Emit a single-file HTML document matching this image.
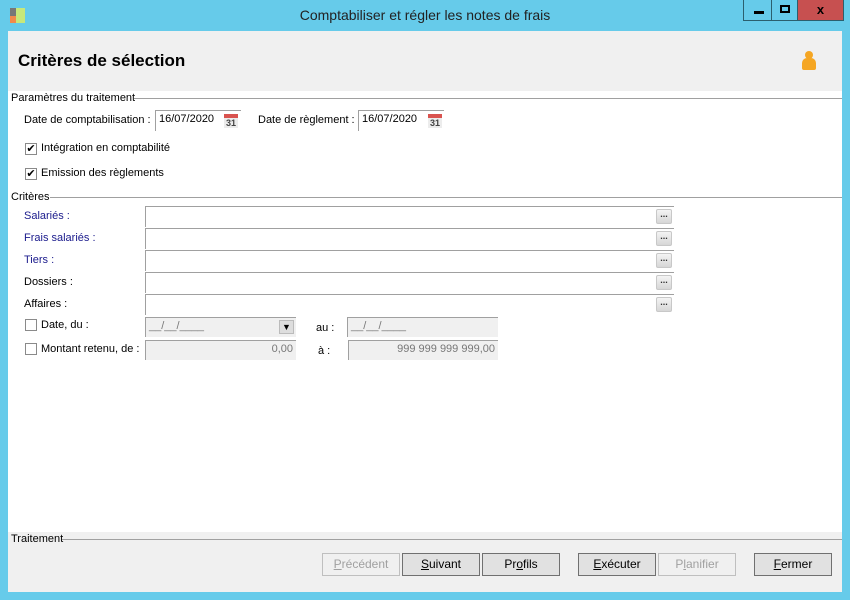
<!DOCTYPE html>
<html><head><meta charset="utf-8"><style>
*{margin:0;padding:0;box-sizing:border-box}
body{width:850px;height:600px;background:#66cbea;font-family:"Liberation Sans",sans-serif;font-size:11px;color:#000;position:relative;overflow:hidden}
.a{position:absolute}
.win{left:8px;top:31px;width:834px;height:561px;background:#fff}
.hdr{left:8px;top:31px;width:834px;height:60px;background:#f0f0f0}
.bot{left:8px;top:532px;width:834px;height:60px;background:#f0f0f0}
.line{height:1px;background:#a0a0a0}
.lbl{white-space:nowrap}
.blue{color:#1a1a8c}
.inp{background:#fff;border-top:1px solid #a0a0a0;border-left:1px solid #a0a0a0;height:21px}
.dis{background:#f0f0f0;border-top:1px solid #a0a0a0;border-left:1px solid #a0a0a0;height:20px;color:#777;padding:2px 3px;font-size:11px}
.dots{width:16px;height:15px;border:1px solid #c8c8c8;border-radius:2px;background:linear-gradient(#f4f4f4,#d6d6d6);font-size:9px;line-height:8px;text-align:center;font-weight:bold;color:#333}
.cb{width:12px;height:12px;border:1px solid #8a8a8a;background:#fff;font-size:11px;line-height:10px;text-align:center}
.btn{height:23px;border:1px solid #707070;background:#e1e1e1;text-align:center;line-height:21px;font-size:12px}
.btn.d{border-color:#bfbfbf;background:#f0f0f0;color:#a0a0a0}
.cal{width:14px;height:14px;background:#ececec;border-top:4px solid #d9534f;font-size:9px;font-weight:bold;color:#444;text-align:center;line-height:10px}
</style></head><body>
<div class="a" style="left:10px;top:8px;width:6px;height:8px;background:#777"></div>
<div class="a" style="left:10px;top:16px;width:6px;height:7px;background:#f28a4b"></div>
<div class="a" style="left:16px;top:8px;width:9px;height:15px;background:#c7e87a"></div>
<div class="a lbl" style="left:0;width:850px;top:7px;text-align:center;font-size:14px;color:#222">Comptabiliser et régler les notes de frais</div>
<div class="a" style="left:743px;top:0;width:29px;height:21px;border:1px solid #2b5f6e;border-top:none"><div class="a" style="left:10px;top:11px;width:10px;height:3px;background:#000"></div></div>
<div class="a" style="left:771px;top:0;width:27px;height:21px;border:1px solid #2b5f6e;border-top:none"><div class="a" style="left:8px;top:5px;width:10px;height:8px;border:2px solid #000"></div></div>
<div class="a" style="left:797px;top:0;width:47px;height:21px;background:#c75050;border:1px solid #2b5f6e;border-top:none;text-align:center;font-weight:bold;font-size:13px;line-height:20px">x</div>
<div class="a win"></div>
<div class="a hdr"></div>
<div class="a lbl" style="left:18px;top:51px;font-size:17px;font-weight:bold">Critères de sélection</div>
<div class="a" style="left:805px;top:51px;width:8px;height:8px;border-radius:50%;background:#f5a623"></div>
<div class="a" style="left:802px;top:58px;width:14px;height:12px;border-radius:5px 5px 2px 2px;background:#f5a623"></div>
<div class="a lbl" style="left:11px;top:92px">Paramètres du traitement</div>
<div class="a line" style="left:134px;top:98px;width:708px"></div>
<div class="a lbl" style="left:24px;top:114px">Date de comptabilisation :</div>
<div class="a inp" style="left:155px;top:110px;width:86px;padding:2px 3px">16/07/2020</div>
<div class="a cal" style="left:224px;top:114px">31</div>
<div class="a lbl" style="left:258px;top:114px">Date de règlement :</div>
<div class="a inp" style="left:358px;top:110px;width:86px;padding:2px 3px">16/07/2020</div>
<div class="a cal" style="left:428px;top:114px">31</div>
<div class="a cb" style="left:25px;top:143px">✔</div><div class="a lbl" style="left:41px;top:142px">Intégration en comptabilité</div>
<div class="a cb" style="left:25px;top:168px">✔</div><div class="a lbl" style="left:41px;top:167px">Emission des règlements</div>
<div class="a lbl" style="left:11px;top:191px">Critères</div>
<div class="a line" style="left:50px;top:197px;width:792px"></div>
<div class="a lbl blue" style="left:24px;top:210px">Salariés :</div>
<div class="a lbl blue" style="left:24px;top:232px">Frais salariés :</div>
<div class="a lbl blue" style="left:24px;top:254px">Tiers :</div>
<div class="a lbl" style="left:24px;top:276px">Dossiers :</div>
<div class="a lbl" style="left:24px;top:298px">Affaires :</div>
<div class="a inp" style="left:145px;top:206px;width:529px"></div><div class="a dots" style="left:656px;top:209px">...</div>
<div class="a inp" style="left:145px;top:228px;width:529px"></div><div class="a dots" style="left:656px;top:231px">...</div>
<div class="a inp" style="left:145px;top:250px;width:529px"></div><div class="a dots" style="left:656px;top:253px">...</div>
<div class="a inp" style="left:145px;top:272px;width:529px"></div><div class="a dots" style="left:656px;top:275px">...</div>
<div class="a inp" style="left:145px;top:294px;width:529px"></div><div class="a dots" style="left:656px;top:297px">...</div>
<div class="a cb" style="left:25px;top:319px"></div><div class="a lbl" style="left:41px;top:319px">Date, du :</div>
<div class="a dis" style="left:145px;top:317px;width:151px">__/__/____</div>
<div class="a" style="left:279px;top:320px;width:15px;height:14px;border:1px solid #bbb;background:#ddd;font-size:9px;text-align:center;line-height:12px">▼</div>
<div class="a lbl" style="left:316px;top:322px">au :</div>
<div class="a dis" style="left:347px;top:317px;width:151px">__/__/____</div>
<div class="a cb" style="left:25px;top:343px"></div><div class="a lbl" style="left:41px;top:343px">Montant retenu, de :</div>
<div class="a dis" style="left:145px;top:340px;width:151px;text-align:right">0,00</div>
<div class="a lbl" style="left:318px;top:345px">à :</div>
<div class="a dis" style="left:348px;top:340px;width:150px;text-align:right">999 999 999 999,00</div>
<div class="a bot"></div>
<div class="a lbl" style="left:11px;top:533px">Traitement</div>
<div class="a line" style="left:62px;top:539px;width:780px"></div>
<div class="a btn d" style="left:322px;top:553px;width:78px"><u>P</u>récédent</div>
<div class="a btn" style="left:402px;top:553px;width:78px"><u>S</u>uivant</div>
<div class="a btn" style="left:482px;top:553px;width:78px">Pr<u>o</u>fils</div>
<div class="a btn" style="left:578px;top:553px;width:78px"><u>E</u>xécuter</div>
<div class="a btn d" style="left:658px;top:553px;width:78px">P<u>l</u>anifier</div>
<div class="a btn" style="left:754px;top:553px;width:78px"><u>F</u>ermer</div>
</body></html>
